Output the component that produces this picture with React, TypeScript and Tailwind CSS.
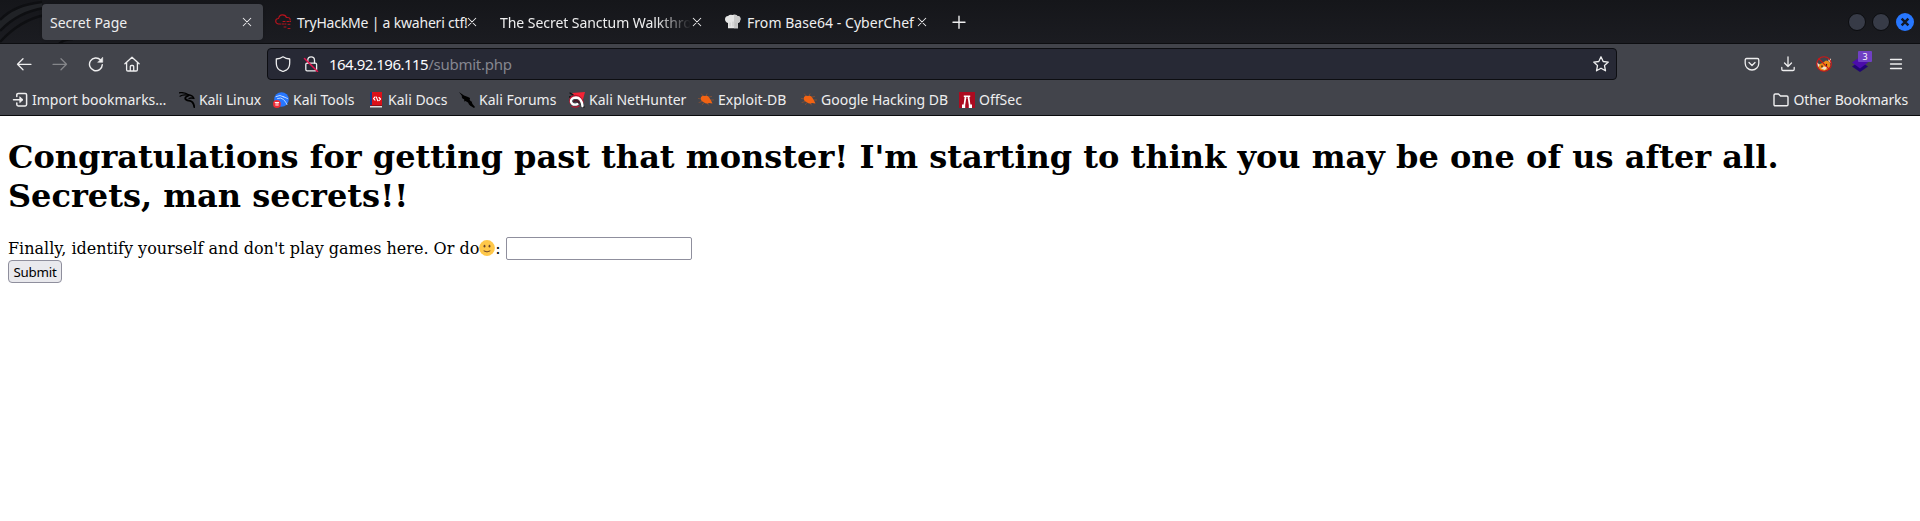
import type { ReactNode } from 'react';

function Icon({ children, size = 16, className = '' }: { children: ReactNode; size?: number; className?: string }) {
  return (
    <svg width={size} height={size} viewBox="0 0 16 16" fill="none" stroke="currentColor" strokeWidth="1.3" strokeLinecap="round" strokeLinejoin="round" className={`shrink-0 ${className}`}>
      {children}
    </svg>
  );
}

const Close = () => (
  <Icon size={12}><path d="M3 3l10 10M13 3L3 13" strokeWidth="1.4" /></Icon>
);

const KaliDragon = () => (
  <Icon className="text-black">
    <path d="M0 .8Q5-.2 10 3" strokeWidth="1.2" />
    <path d="M1 4.200Q4 2 9.500 3.200" strokeWidth="1.2" />
    <path d="M9.500 3Q13.500 3 15 6.500Q12 5.500 10 6.500" strokeWidth="1.3" />
    <path d="M9 4Q5.500 5 6.500 7.200Q8 8.500 11 8.800Q14.500 9.500 15.300 15" strokeWidth="1.8" />
  </Icon>
);

const KaliTools = () => (
  <Icon>
    <circle cx="8.5" cy="7.5" r="7.3" fill="#2777ff" stroke="none" />
    <path d="M3 4.500Q7 2 11 5M4.500 6.500Q8 5 10.500 7.500T14 12.500M10 4.500L14.500 6.500" stroke="#b9d6ff" strokeWidth="1" />
    <circle cx="3.9" cy="12" r="3.9" fill="#ef2b35" stroke="none" />
    <path d="M2.2 10.5h3.5M3.1 10.5v3M4.9 10.5v3" stroke="#fff" strokeWidth="0.9" />
  </Icon>
);

const KaliDocs = () => (
  <Icon>
    <path d="M2 0h12v13H2z" fill="#dc1018" stroke="none" />
    <path d="M2 0h2v13H2z" fill="#173b82" stroke="none" />
    <path d="M2 13h12v2.5H2z" fill="#ddd" stroke="none" />
    <path d="M2 13h12v1H2z" fill="#8e1018" stroke="none" />
    <path d="M7 5L5.500 6.600 7 8.200M11 5.500l1.500 1.500L11 8.600M8.300 5l1.500 3.700" stroke="#fff" strokeWidth="1.1" />
  </Icon>
);

const KaliForums = () => (
  <Icon className="text-black">
    <path d="M0 0l5 3.500 4 1.500 2 1-.3 2 2 2 .8 2 2.500 3-1 1-4-2.500-2-3-2.500-1.500-1.500.5.500-2-2-1-1-2 1 .2z" fill="currentColor" stroke="none" />
    <path d="M3.500 4.500l2 3M10 12l2 1M12.500 10l-.5 2" strokeWidth=".7" />
  </Icon>
);

const NetHunter = () => (
  <Icon>
    <path d="M3 1l13-1-3 11z" fill="#f42335" stroke="none" />
    <path d="M1 1l3 2M0 5h2M12 12l3 3" stroke="#111" strokeWidth="1.3" />
    <path d="M1.800 11Q0 4.300 6.500 4Q11 4 13.500 10" stroke="#b3122c" strokeWidth="2.500" />
    <path d="M13.500 14Q12.500 5.500 7 5.500Q1.500 6 2 9.800Q3.500 13.800 8.500 12.200" stroke="#fff" strokeWidth="2.300" />
    <path d="M5 9.300q3-2 5 1.500" stroke="#4c1020" strokeWidth="1.500" />
    <path d="M3 14.500q4 1.500 7-.5" stroke="#c01430" strokeWidth="1.300" />
  </Icon>
);

const Bug = () => (
  <Icon className="text-[#f26313]">
    <path d="M3 5q2-2 4-1 3-1 4.500 2l1.500 2.500 1.500 3-3.500-.5q-2.500 1.500-5.500-1Q2 9 3 5z" fill="currentColor" stroke="none" />
    <path d="M5 4L3.500 2M8 4l1-2M11 5l2.500-.5M3 7L.5 6.500M4 9.500l-3 1M6 10.500l-1.500 2M9 11l1.500 2M12.500 8h3" strokeWidth="0.500" strokeOpacity=".7" />
  </Icon>
);

const OffSec = () => (
  <Icon>
    <path d="M0 0h16v16H0z" fill="#ac0b20" stroke="none" />
    <path d="M4.800 3.500h6.400v1.500h-.8l1 7.500H13V16H9.800v-3L8.900 7H7.100l-.9 6v3H3v-3.500h1.600l1-7.500h-.8z" fill="#fff" stroke="none" />
    <path d="M7.300 5h1.400v5H7.300z" fill="#ac0b20" stroke="none" />
  </Icon>
);

const ImportIcon = () => (
  <Icon>
    <path d="M4.800 4.500V2.800Q4.800 1.400 6.200 1.400h7Q14.600 1.400 14.600 2.800v9.800q0 1.400-1.400 1.400h-7q-1.400 0-1.400-1.400V11M1.500 7.700h8.500" strokeWidth="1.500" />
    <path d="M8 5l3 2.700-3 2.700z" fill="currentColor" strokeWidth=".8" />
  </Icon>
);

const Cloud = () => (
  <Icon className="text-[#b8131d]">
    <path d="M5.500 10H3.400Q.7 9.500.7 7T3.600 4.500Q4.400.7 7.600.9T11.400 3.500Q15.300 3 15.200 6" strokeWidth="1.1" />
    <path d="M8 7.500h2M12 7.500h4M7 10h4M13 10.300h2M9 13h2M13 14.500h2.500" strokeWidth="1" strokeDasharray="2 1" />
  </Icon>
);

const Chef = () => (
  <Icon>
    <path d="M3 9Q0 8 0 5.200T3 2Q5 0 7.500 1 10-.4 12.500 2 15.500 2 15.500 5T13 9v5.300H3z" fill="#e5e5e5" stroke="none" />
    <path d="M9 1.500q2-1.500 3.500.5 3 0 3 3T13 9v5.300H9z" fill="#c9c9c9" stroke="none" />
    <path d="M5 9v3M8 8v4M11 9v3" stroke="#aaa" strokeWidth=".5" />
  </Icon>
);

const bookmarks = [
  { label: 'Import bookmarks…', icon: <ImportIcon />, width: 'w-[167px]' },
  { label: 'Kali Linux', icon: <KaliDragon />, width: 'w-[94px] tracking-[-0.1px]' },
  { label: 'Kali Tools', icon: <KaliTools />, width: 'w-[95px]' },
  { label: 'Kali Docs', icon: <KaliDocs />, width: 'w-[91px]' },
  { label: 'Kali Forums', icon: <KaliForums />, width: 'w-[110px]' },
  { label: 'Kali NetHunter', icon: <NetHunter />, width: 'w-[129px]' },
  { label: 'Exploit-DB', icon: <Bug />, width: 'w-[103px]' },
  { label: 'Google Hacking DB', icon: <Bug />, width: 'w-[158px]' },
  { label: 'OffSec', icon: <OffSec />, width: 'w-[80px]' },
];

function TabBar() {
  return (
    <header className="relative flex h-[44px] items-start overflow-hidden border-b border-[#0d0e11] bg-linear-to-b from-[#15161a] to-[#1b1c21] pt-[4px]">
      <svg className="absolute left-0 top-0" width="80" height="44" fill="none" aria-hidden="true">
        <path d="M0 20Q14 5 42 2v7Q18 12 0 31z" fill="#202226" />
        <path d="M0 20Q14 5 42 2M0 31Q18 12 44 8M0 42Q20 20 45 15M59 44q5-5 14-5" stroke="#0e0f12" strokeWidth="2.500" />
      </svg>
      <div className="relative ml-[42px] flex h-9 w-[221px] items-center justify-between rounded bg-[#42444b] pl-2 pr-[10px] shadow">
        <span>Secret Page</span><Close />
      </div>
      <div className="ml-[12px] flex h-9 w-[203px] items-center">
        <Cloud /><span className="ml-[6px] w-[169px] shrink-0 whitespace-nowrap tracking-[-0.2px]">TryHackMe | a kwaheri ctf!</span><Close />
      </div>
      <div className="ml-[22px] flex h-9 w-[203px] items-center">
        <span className="w-[191px] overflow-hidden whitespace-nowrap tracking-[-0.05px] mask-r-from-82% mask-r-to-100%">The Secret Sanctum Walkthrough</span><Close />
      </div>
      <div className="ml-[22px] flex h-9 w-[203px] items-center">
        <Chef /><span className="ml-[6px] w-[169px] whitespace-nowrap tracking-[0.05px]">From Base64 - CyberChef</span><Close />
      </div>
      <div className="ml-[23px] flex h-9 items-center">
        <Icon><path d="M8 2.2v12M2 8.2h12" strokeWidth="1.4" /></Icon>
      </div>
      <div className="ml-auto mr-[6px] flex h-9 items-center gap-[6px]">
        <span className="size-[18px] rounded-full border border-[#0b0c0f] bg-[#373b47]" />
        <span className="size-[18px] rounded-full border border-[#0b0c0f] bg-[#373b47]" />
        <span className="flex size-[18px] items-center justify-center rounded-full bg-[#2777ff] text-[#111827]">
          <Icon size={12}><path d="M3.500 3.500l9 9M12.500 3.500l-9 9" strokeWidth="3.2" strokeLinecap="butt" /></Icon>
        </span>
      </div>
    </header>
  );
}

function Toolbar() {
  return (
    <div className="flex h-[40px] items-center">
      <div className="ml-[16px] flex w-[251px] items-center gap-[20px]">
        <Icon><path d="M15 8.3H1.5M7 2.8L1.5 8.3 7 13.8" /></Icon>
        <Icon className="text-[#85868a]"><path d="M1 8.3h13.5M9 2.8l5.500 5.500L9 13.8" /></Icon>
        <Icon><path d="M14.3 8.600A6.400 6.400 0 1 1 12.600 4" strokeWidth="1.4" /><path d="M14.700 1.600v4.700H10z" fill="currentColor" strokeWidth=".6" /></Icon>
        <Icon><path d="M.9 7.800L8 1.200l7.100 6.600M2.600 6.500v7.200q0 1.300 1.300 1.300h8.200q1.300 0 1.300-1.300V6.500M6.300 15v-4.500q0-1 1-1h1.400q1 0 1 1V15" /></Icon>
      </div>
      <div className="flex h-[32px] w-[1350px] items-center rounded border border-[#0d0e12] bg-[#272935] pl-[7px] pr-[7px]">
        <Icon><path d="M8 .8q3 2 6.700 2.200v3.800q0 5-3 7L8 15.500l-3.700-1.700q-3-2-3-7V3Q5 2.800 8 .800z" /></Icon>
        <Icon className="ml-[12px]">
          <rect x="2.800" y="7.200" width="10.800" height="7.600" rx="1.300" /><path d="M4.800 7V4.200a3.300 3.300 0 0 1 6.700 0V7" />
          <path d="M1.500 2.500l13 13" stroke="#e3134d" strokeWidth="1.500" />
        </Icon>
        <span className="ml-[10px] whitespace-nowrap text-[15px] tracking-[-0.52px] text-[#fbfbfe]">164.92.196.115<span className="tracking-[-0.25px] text-[#85868f]">/submit.php</span></span>
        <Icon className="ml-auto"><path d="M8 .8l2.200 4.700 5.100.6-3.800 3.500 1 5.200L8 12.200l-4.500 2.600 1-5.200L.7 6.100l5.100-.6z" /></Icon>
      </div>
      <div className="ml-auto mr-[16px] flex items-center gap-[20px]">
        <Icon><path d="M2.600 2.500h10.800q1.400 0 1.400 1.400v3.300a6.800 6.800 0 0 1-13.600 0V3.900q0-1.400 1.400-1.400zM5 6.500l3 3 3-3" /></Icon>
        <Icon><path d="M8 .8v9.400M4.500 7L8 10.500 11.500 7M1.800 11.500v1.700q0 1.300 1.300 1.300h9.800q1.300 0 1.300-1.300v-1.700" /></Icon>
        <Icon>
          <path d="M2.500 8.500l4-1.500L10 4.500l3.500 1 1 4-2 3.500-4 2-4-.5-2-3z" fill="#ee8b16" stroke="none" />
          <path d="M.8 6l3 3-2 2.500zM12 4l3-1.500v5zM5 12.500l3-2 3.500.5-2.500 3z" fill="#f2dfca" stroke="none" />
          <path d="M6 10v.8M10.500 8.500v.8" stroke="#222" />
          <circle cx="8" cy="8" r="7.300" stroke="#cf1717" strokeWidth="1.100" /><path d="M3 2.800l10 10.400" stroke="#cf1717" strokeWidth="1.200" />
        </Icon>
        <span className="relative block size-4">
          <Icon><path d="M0 10.500L8 5l8 5.500L8 16z" fill="#210574" stroke="none" /><path d="M0 6.500L8 1l8 5.500-8 6z" fill="#4b0cab" stroke="none" /></Icon>
          <span className="absolute -top-[5px] left-[6px] flex h-[11px] w-[14px] items-center justify-center rounded-[1px] bg-[#7040c4] text-[9px] leading-none text-white">3</span>
        </span>
        <Icon><path d="M2.500 3.500h11M2.500 8h11M2.500 12.500h11" /></Icon>
      </div>
    </div>
  );
}

export default function App() {
  return (
    <div className="flex h-[521px] w-[1920px] flex-col overflow-hidden bg-white">
      <div className="flex h-[116px] shrink-0 flex-col border-b border-[#090a0c] bg-[#42444b] font-['Noto_Sans',sans-serif] text-[14px] text-[#eeeeef]">
        <TabBar />
        <Toolbar />
        <nav className="flex h-[31px] items-center whitespace-nowrap pl-[12px] pr-[12px]">
          {bookmarks.map(({ label, icon, width }) => (
            <div key={label} className={`flex items-center gap-1 ${width}`}>{icon}<span>{label}</span></div>
          ))}
          <div className="ml-auto flex items-center gap-1">
            <Icon><path d="M1 12.500V3.200q0-1.200 1.200-1.200h3.300l2 2h6.200Q15 4 15 5.200v7.300q0 1.300-1.200 1.300H2.200Q1 13.800 1 12.500z" strokeWidth="1.400" /></Icon>
            <span className="tracking-[-0.12px]">Other Bookmarks</span>
          </div>
        </nav>
      </div>
      <main className="px-2 pt-[22px] font-['DejaVu_Serif',serif] text-[16px] text-black">
        <h1 className="text-[32px] font-bold leading-[39px]">Congratulations for getting past that monster! I'm starting to think you may be one of us after all. Secrets, man secrets!!</h1>
        <form className="mt-[21px]" onSubmit={(event) => event.preventDefault()}>
          <div className="flex h-[23px] items-center">
            <label htmlFor="identity" className="flex items-center whitespace-nowrap">
              Finally, identify yourself and don't play games here. Or do
              <svg width="16" height="17" viewBox="0 0 16 17" role="img">
                <circle cx="8" cy="8" r="7.900" fill="#ffc84a" />
                <ellipse cx="5.500" cy="6.200" rx=".9" ry="1.400" fill="#6b432b" /><ellipse cx="10.500" cy="6.200" rx=".9" ry="1.400" fill="#6b432b" />
                <path d="M5 11q3 2 6 0" fill="none" stroke="#6b432b" strokeLinecap="round" />
              </svg>:
            </label>
            <input id="identity" className="ml-[5px] h-[23px] w-[186px] rounded-[2px] border border-[#8f8f9d] bg-white" />
          </div>
          <button type="submit" className="flex h-[23px] w-[54px] items-center justify-center rounded-[4px] border border-[#8f8f9d] bg-[#e9e9ed] pt-[2px] font-['Noto_Sans',sans-serif] text-[13.333px] tracking-[-0.25px]">Submit</button>
        </form>
      </main>
    </div>
  );
}
